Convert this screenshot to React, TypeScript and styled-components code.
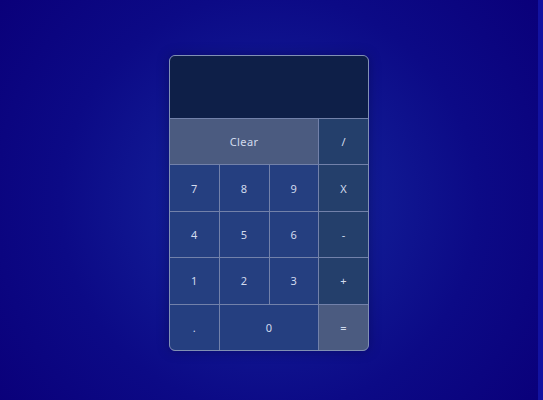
import React from "react";
import styled, { createGlobalStyle } from "styled-components";

const GlobalStyle = createGlobalStyle`
  html, body { margin: 0; padding: 0; }
  body {
    background: #0b0a80;
    font-family: "Noto Sans", "DejaVu Sans", sans-serif;
  }
`;

const Page = styled.div`
  display: flex;
  width: 543px;
  height: 400px;
  overflow: hidden;
`;

const Stage = styled.main`
  flex: 1;
  height: 406px;
  display: flex;
  align-items: center;
  justify-content: center;
  background: radial-gradient(circle at 50% 50%, #141e9a 0%, #111a94 30%, #0c0a86 62%, #0a007a 100%);
`;

const Edge = styled.div`
  width: 5px;
  background: #1212a0;
`;

const Calc = styled.div`
  width: 200px;
  height: 296px;
  border: 1px solid #8190b4;
  border-radius: 6px;
  overflow: hidden;
  background: #7281aa;
  display: grid;
  grid-template-columns: repeat(4, 1fr);
  grid-template-rows: 62px repeat(5, 1fr);
  gap: 1px;
  box-shadow: 0 0 12px rgba(0, 0, 40, 0.35);
  box-sizing: border-box;
`;

const Display = styled.div`
  grid-column: span 4;
  background: #0e1f48;
`;

type Kind = "num" | "op" | "light";

const Key = styled.button<{ $kind: Kind; $span?: number }>`
  grid-column: span ${(p) => p.$span ?? 1};
  border: none;
  margin: 0;
  padding: 0;
  font-family: "Noto Sans", "DejaVu Sans", sans-serif;
  font-size: 11px;
  letter-spacing: 0.4px;
  color: #d2dbee;
  background: ${(p) =>
    p.$kind === "num" ? "#253f80" : p.$kind === "op" ? "#243f6b" : "#4b5b80"};
  display: flex;
  align-items: center;
  justify-content: center;
`;

export default function App() {
  return (
    <>
      <GlobalStyle />
      <Page>
        <Stage>
          <Calc>
            <Display />
            <Key $kind="light" $span={3}>Clear</Key>
            <Key $kind="op">/</Key>
            <Key $kind="num">7</Key>
            <Key $kind="num">8</Key>
            <Key $kind="num">9</Key>
            <Key $kind="op">X</Key>
            <Key $kind="num">4</Key>
            <Key $kind="num">5</Key>
            <Key $kind="num">6</Key>
            <Key $kind="op">-</Key>
            <Key $kind="num">1</Key>
            <Key $kind="num">2</Key>
            <Key $kind="num">3</Key>
            <Key $kind="op">+</Key>
            <Key $kind="num">.</Key>
            <Key $kind="num" $span={2}>0</Key>
            <Key $kind="light">=</Key>
          </Calc>
        </Stage>
        <Edge />
      </Page>
    </>
  );
}
